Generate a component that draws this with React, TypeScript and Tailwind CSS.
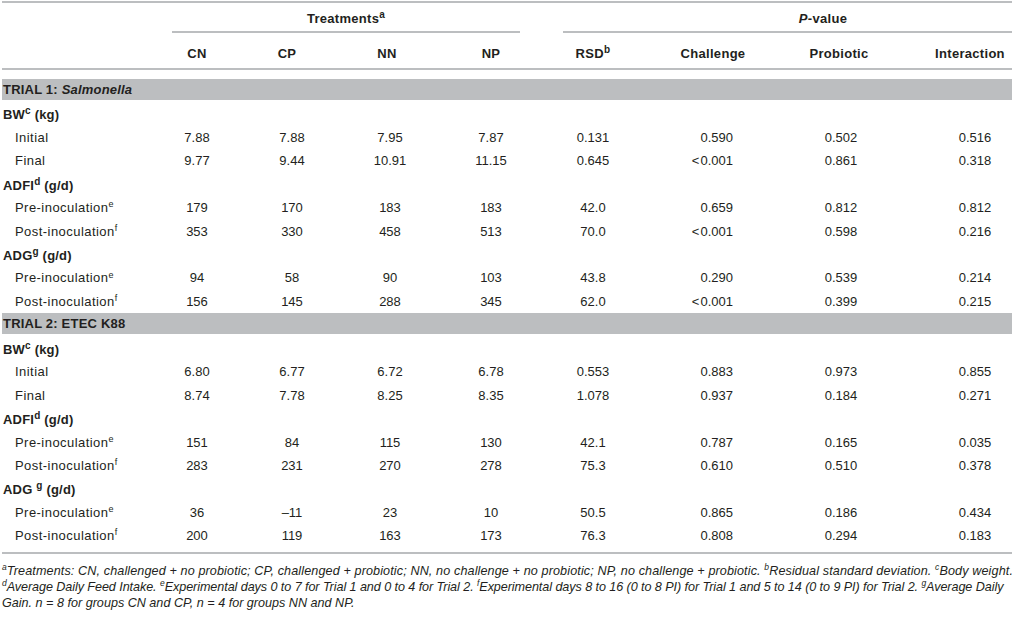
import React from 'react';

const cols =
  'grid grid-cols-[148px_94px_96px_100px_102px_102px_138px_118px_112px] items-center';

type Row =
  | { kind: 'band'; label: React.ReactNode }
  | { kind: 'group'; label: React.ReactNode }
  | { kind: 'data'; label: React.ReactNode; v: string[] };

const Sup = ({ children }: { children: React.ReactNode }) => (
  <sup className="text-[9px] font-normal not-italic top-[-0.55em]">{children}</sup>
);
const BSup = ({ children }: { children: React.ReactNode }) => (
  <sup className="text-[10px] top-[-0.5em]">{children}</sup>
);

const lt = '<\u200A0.001';

const rows: Row[] = [
  {
    kind: 'band',
    label: (
      <>
        TRIAL 1: <i>Salmonella</i>
      </>
    ),
  },
  { kind: 'group', label: <>BW<BSup>c</BSup> (kg)</> },
  { kind: 'data', label: 'Initial', v: ['7.88', '7.88', '7.95', '7.87', '0.131', '0.590', '0.502', '0.516'] },
  { kind: 'data', label: 'Final', v: ['9.77', '9.44', '10.91', '11.15', '0.645', lt, '0.861', '0.318'] },
  { kind: 'group', label: <>ADFI<BSup>d</BSup> (g/d)</> },
  { kind: 'data', label: <>Pre-inoculation<Sup>e</Sup></>, v: ['179', '170', '183', '183', '42.0', '0.659', '0.812', '0.812'] },
  { kind: 'data', label: <>Post-inoculation<Sup>f</Sup></>, v: ['353', '330', '458', '513', '70.0', lt, '0.598', '0.216'] },
  { kind: 'group', label: <>ADG<BSup>g</BSup> (g/d)</> },
  { kind: 'data', label: <>Pre-inoculation<Sup>e</Sup></>, v: ['94', '58', '90', '103', '43.8', '0.290', '0.539', '0.214'] },
  { kind: 'data', label: <>Post-inoculation<Sup>f</Sup></>, v: ['156', '145', '288', '345', '62.0', lt, '0.399', '0.215'] },
  { kind: 'band', label: 'TRIAL 2: ETEC K88' },
  { kind: 'group', label: <>BW<BSup>c</BSup> (kg)</> },
  { kind: 'data', label: 'Initial', v: ['6.80', '6.77', '6.72', '6.78', '0.553', '0.883', '0.973', '0.855'] },
  { kind: 'data', label: 'Final', v: ['8.74', '7.78', '8.25', '8.35', '1.078', '0.937', '0.184', '0.271'] },
  { kind: 'group', label: <>ADFI<BSup>d</BSup> (g/d)</> },
  { kind: 'data', label: <>Pre-inoculation<Sup>e</Sup></>, v: ['151', '84', '115', '130', '42.1', '0.787', '0.165', '0.035'] },
  { kind: 'data', label: <>Post-inoculation<Sup>f</Sup></>, v: ['283', '231', '270', '278', '75.3', '0.610', '0.510', '0.378'] },
  { kind: 'group', label: <>ADG <BSup>g</BSup> (g/d)</> },
  { kind: 'data', label: <>Pre-inoculation<Sup>e</Sup></>, v: ['36', '\u201311', '23', '10', '50.5', '0.865', '0.186', '0.434'] },
  { kind: 'data', label: <>Post-inoculation<Sup>f</Sup></>, v: ['200', '119', '163', '173', '76.3', '0.808', '0.294', '0.183'] },
];

// per-column alignment for value cells
const valueCls = [
  'text-center',
  'text-center',
  'text-center',
  'text-center',
  'text-center',
  'text-right pr-[49px]',
  'text-center',
  'text-center pl-[38px]',
];

const FSup = ({ children }: { children: React.ReactNode }) => (
  <sup className="text-[8.5px] top-[-0.6em]">{children}</sup>
);

export default function App() {
  return (
    <div className="w-[1014px] h-[617px] bg-white px-[2px] font-['Liberation_Sans',Arial,sans-serif] text-[13px] text-[#231f20]">
      {/* Header */}
      <div className="border-t-2 border-[#bcbec0] mt-[1px] font-bold tracking-[0.3px]">
        <div className="flex h-[30px]">
          <div className="w-[170px]" />
          <div className="w-[348px] border-b-2 border-[#bcbec0] flex items-center justify-center pt-[4px]">
            <span>
              Treatments<BSup>a</BSup>
            </span>
          </div>
          <div className="w-[43px]" />
          <div className="flex-1 border-b-2 border-[#bcbec0] flex items-center justify-center pl-[71px] pt-[4px]">
            <span>
              <i>P</i>-value
            </span>
          </div>
        </div>
        <div className={`${cols} h-[37px] pt-[6px] border-b-2 border-[#bcbec0]`}>
          <div />
          <div className="text-center">CN</div>
          <div className="text-center pr-[10px]">CP</div>
          <div className="text-center pr-[6px]">NN</div>
          <div className="text-center">NP</div>
          <div className="text-center">
            RSD<BSup>b</BSup>
          </div>
          <div className="text-center">Challenge</div>
          <div className="text-center pr-[4px]">Probiotic</div>
          <div className="text-center pl-[28px]">Interaction</div>
        </div>
      </div>

      {/* Body */}
      <div className="mt-[9px] border-b-2 border-[#bcbec0] pb-[4px]">
        {rows.map((r, i) => {
          if (r.kind === 'band')
            return (
              <div key={i} className="h-[23.44px]">
                <div className="h-[21px] bg-[#bcbec0] font-bold flex items-center pl-[1px] tracking-[0.2px]">
                  <span>{r.label}</span>
                </div>
              </div>
            );
          if (r.kind === 'group')
            return (
              <div key={i} className="h-[23.44px] flex items-center font-bold pl-[1px] pt-[2px] tracking-[0.2px]">
                <span>{r.label}</span>
              </div>
            );
          return (
            <div key={i} className={`${cols} h-[23.44px]`}>
              <div className="pl-[13px] whitespace-nowrap tracking-[0.45px]">{r.label}</div>
              {r.v.map((v, j) => (
                <div key={j} className={valueCls[j]}>
                  {v}
                </div>
              ))}
            </div>
          );
        })}
      </div>

      {/* Footnotes */}
      <div className="pt-[9px] italic text-[12.6px] leading-[16px] whitespace-nowrap">
        <div className="tracking-[0.12px]">
          <FSup>a</FSup>Treatments: CN, challenged + no probiotic; CP, challenged + probiotic; NN, no challenge + no
          probiotic; NP, no challenge + probiotic. <FSup>b</FSup>Residual standard deviation. <FSup>c</FSup>Body weight.
        </div>
        <div className="tracking-[-0.07px]">
          <FSup>d</FSup>Average Daily Feed Intake. <FSup>e</FSup>Experimental days 0 to 7 for Trial 1 and 0 to 4 for
          Trial 2. <FSup>f</FSup>Experimental days 8 to 16 (0 to 8 PI) for Trial 1 and 5 to 14 (0 to 9 PI) for Trial 2.{' '}
          <FSup>g</FSup>Average Daily
        </div>
        <div>
          Gain. <i>n</i> = 8 for groups CN and CP, <i>n</i> = 4 for groups NN and NP.
        </div>
      </div>
    </div>
  );
}
